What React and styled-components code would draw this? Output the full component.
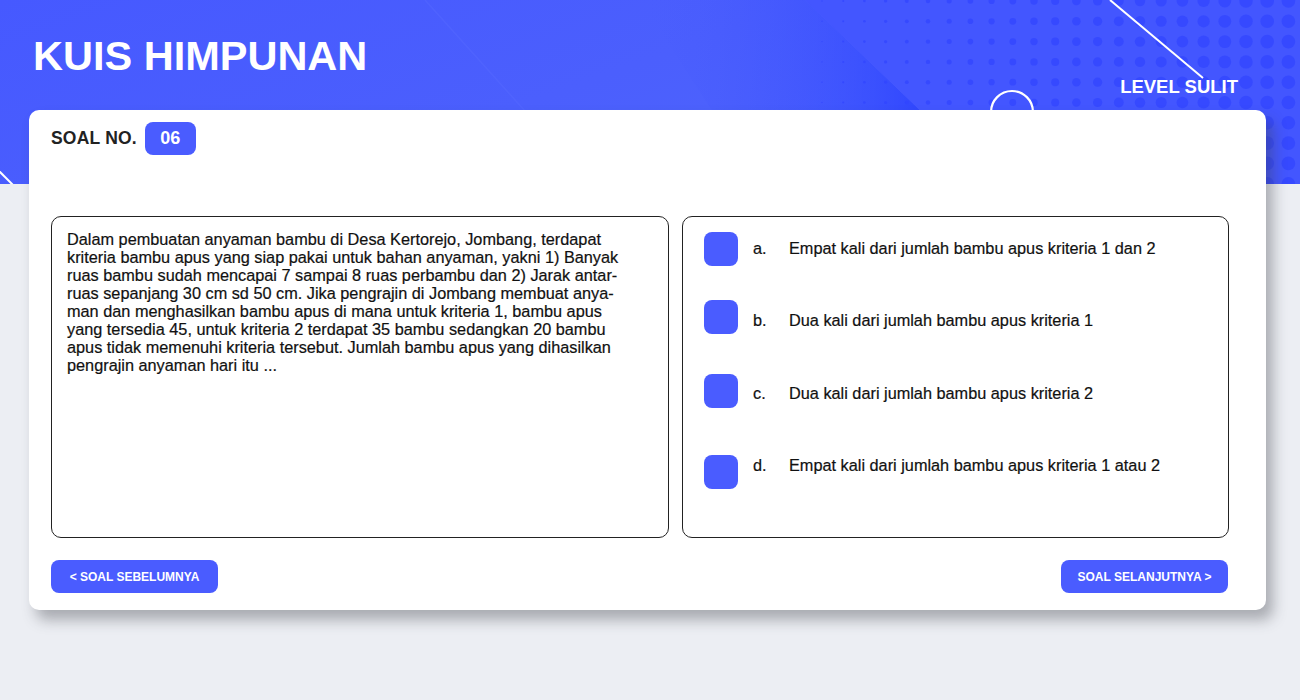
import React from 'react';
import styled, {createGlobalStyle} from 'styled-components';

const GlobalStyle = createGlobalStyle`
  body {
    margin: 0;
    background: #eceef3;
    font-family: "Liberation Sans", Arial, sans-serif;
  }
`

const Page = styled.div`
  width: 1300px;
  height: 700px;
  overflow: hidden;
  background: #eceef3;
`

const Header = styled.header`
  position: relative;
  height: 184px;
  overflow: hidden;
  background: linear-gradient(160deg, #4659ff 0%, #4b5ffd 45%, #5068fd 100%);
`

const Decor = styled.svg`
  position: absolute;
  left: 0;
  top: 0;
`

const HeaderInner = styled.div`
  position: relative;
  display: flex;
  justify-content: space-between;
  align-items: flex-start;
  padding: 36px 62px 0 33px;
`

const Title = styled.h1`
  margin: 0;
  font-size: 41.5px;
  line-height: 40px;
  font-weight: 700;
  color: #fff;
`

const Level = styled.div`
  margin-top: 40px;
  font-size: 18.5px;
  font-weight: 700;
  color: #fff;
`

const Card = styled.main`
  position: relative;
  margin: -74px 0 0 29px;
  width: 1237px;
  height: 500px;
  box-sizing: border-box;
  background: #fff;
  border-radius: 10px;
  box-shadow: 7px 10px 14px rgba(60, 62, 70, 0.38);
  padding: 12px 38px 0 22px;
  display: flex;
  flex-direction: column;
`

const NumberRow = styled.div`
  display: flex;
  align-items: center;
  gap: 8px;
  flex: none;
`

const NumberLabel = styled.span`
  font-size: 17.5px;
  font-weight: 700;
  color: #222;
  letter-spacing: 0.2px;
`

const Badge = styled.span`
  display: inline-flex;
  align-items: center;
  justify-content: center;
  width: 51px;
  height: 33px;
  border-radius: 8px;
  background: #4a5cff;
  color: #fff;
  font-size: 18px;
  font-weight: 700;
`

const Panels = styled.div`
  margin-top: 61px;
  display: grid;
  grid-template-columns: 618px 547px;
  gap: 13px;
  height: 322px;
  flex: none;
`

const Box = styled.section`
  border: 1px solid #222;
  border-radius: 10px;
  box-sizing: border-box;
`

const Question = styled(Box)`
  padding: 13px 15px;
  font-size: 16.3px;
  line-height: 18px;
  color: #111;
  -webkit-text-stroke: 0.2px #111;
`

const Line = styled.span`
  display: block;
  white-space: nowrap;
`

const Options = styled(Box)`
  padding: 0 21px;
  display: flex;
  flex-direction: column;
  gap: 10.5px;
`

const Option = styled.div`
  display: flex;
  align-items: center;
  height: 62px;
  flex: none;
  font-size: 16.3px;
  color: #111;
  -webkit-text-stroke: 0.2px #111;
`

const Check = styled.span`
  width: 34px;
  height: 34px;
  border-radius: 8px;
  background: #4a5cff;
  flex: none;
  transform: translateY(${p => p.shift}px);
`

const Letter = styled.span`
  width: 36px;
  margin-left: 15px;
`

const Footer = styled.div`
  margin-top: 22px;
  display: flex;
  justify-content: space-between;
  flex: none;
`

const NavButton = styled.button`
  width: 167px;
  height: 33px;
  border: none;
  border-radius: 8px;
  background: #4a5cff;
  color: #fff;
  font-family: "Liberation Sans", Arial, sans-serif;
  font-size: 12px;
  font-weight: 700;
  cursor: pointer;
`

const questionLines = [
  'Dalam pembuatan anyaman bambu di Desa Kertorejo, Jombang, terdapat',
  'kriteria bambu apus yang siap pakai untuk bahan anyaman, yakni 1) Banyak',
  'ruas bambu sudah mencapai 7 sampai 8 ruas perbambu dan 2) Jarak antar-',
  'ruas sepanjang 30 cm sd 50 cm. Jika pengrajin di Jombang membuat anya-',
  'man dan menghasilkan bambu apus di mana untuk kriteria 1, bambu apus',
  'yang tersedia 45, untuk kriteria 2 terdapat 35 bambu sedangkan 20 bambu',
  'apus tidak memenuhi kriteria tersebut. Jumlah bambu apus yang dihasilkan',
  'pengrajin anyaman hari itu ...',
]

const options = [
  {letter: 'a.', text: 'Empat kali dari jumlah bambu apus kriteria 1 dan 2', shift: 1},
  {letter: 'b.', text: 'Dua kali dari jumlah bambu apus kriteria 1', shift: -4},
  {letter: 'c.', text: 'Dua kali dari jumlah bambu apus kriteria 2', shift: -2},
  {letter: 'd.', text: 'Empat kali dari jumlah bambu apus kriteria 1 atau 2', shift: 6},
]

function Dots() {
    const dots = []
    for (let c = 0; c < 24; c++) {
        const x = 822 + c * 21.2
        const r = Math.min(0.7 + c * 0.3, 6.8)
        for (let row = 0; row < 10; row++) {
            dots.push(<circle key={c + '-' + row} cx={x} cy={1 + row * 20.3} r={r} fill="#3044ff" opacity="0.7"/>)
        }
    }
    return <g>{dots}</g>
}

export default function App() {
    return (
        <Page>
            <GlobalStyle/>
            <Header>
                <Decor width="1300" height="184" viewBox="0 0 1300 184">
                    <defs>
                        <linearGradient id="band" x1="0" y1="0" x2="1" y2="0">
                            <stop offset="0" stopColor="#4a5dfd" stopOpacity="0"/>
                            <stop offset="0.65" stopColor="#2c43ff" stopOpacity="0.55"/>
                            <stop offset="1" stopColor="#1b33ff"/>
                        </linearGradient>
                    </defs>
                    <polygon points="640,0 805,0 997,184 760,184" fill="url(#band)"/>
                    <polygon points="805,0 1300,0 1300,184 997,184" fill="#4356ff"/>
                    <Dots/>
                    <line x1="425" y1="0" x2="560" y2="150" stroke="#5568ff" strokeWidth="1.5" opacity="0.5"/>
                    <line x1="1110" y1="0" x2="1203" y2="78" stroke="#fff" strokeWidth="2"/>
                    <circle cx="1012" cy="112" r="21" fill="none" stroke="#fff" strokeWidth="2.2"/>
                    <line x1="-2" y1="170" x2="14" y2="186" stroke="#fff" strokeWidth="2"/>
                </Decor>
                <HeaderInner>
                    <Title>KUIS HIMPUNAN</Title>
                    <Level>LEVEL SULIT</Level>
                </HeaderInner>
            </Header>
            <Card>
                <NumberRow>
                    <NumberLabel>SOAL NO.</NumberLabel>
                    <Badge>06</Badge>
                </NumberRow>
                <Panels>
                    <Question>
                        {questionLines.map(l => <Line key={l}>{l}</Line>)}
                    </Question>
                    <Options>
                        {options.map(o => (
                            <Option key={o.letter}>
                                <Check shift={o.shift}/>
                                <Letter>{o.letter}</Letter>
                                <span>{o.text}</span>
                            </Option>
                        ))}
                    </Options>
                </Panels>
                <Footer>
                    <NavButton>&lt; SOAL SEBELUMNYA</NavButton>
                    <NavButton>SOAL SELANJUTNYA &gt;</NavButton>
                </Footer>
            </Card>
        </Page>
    );
}
